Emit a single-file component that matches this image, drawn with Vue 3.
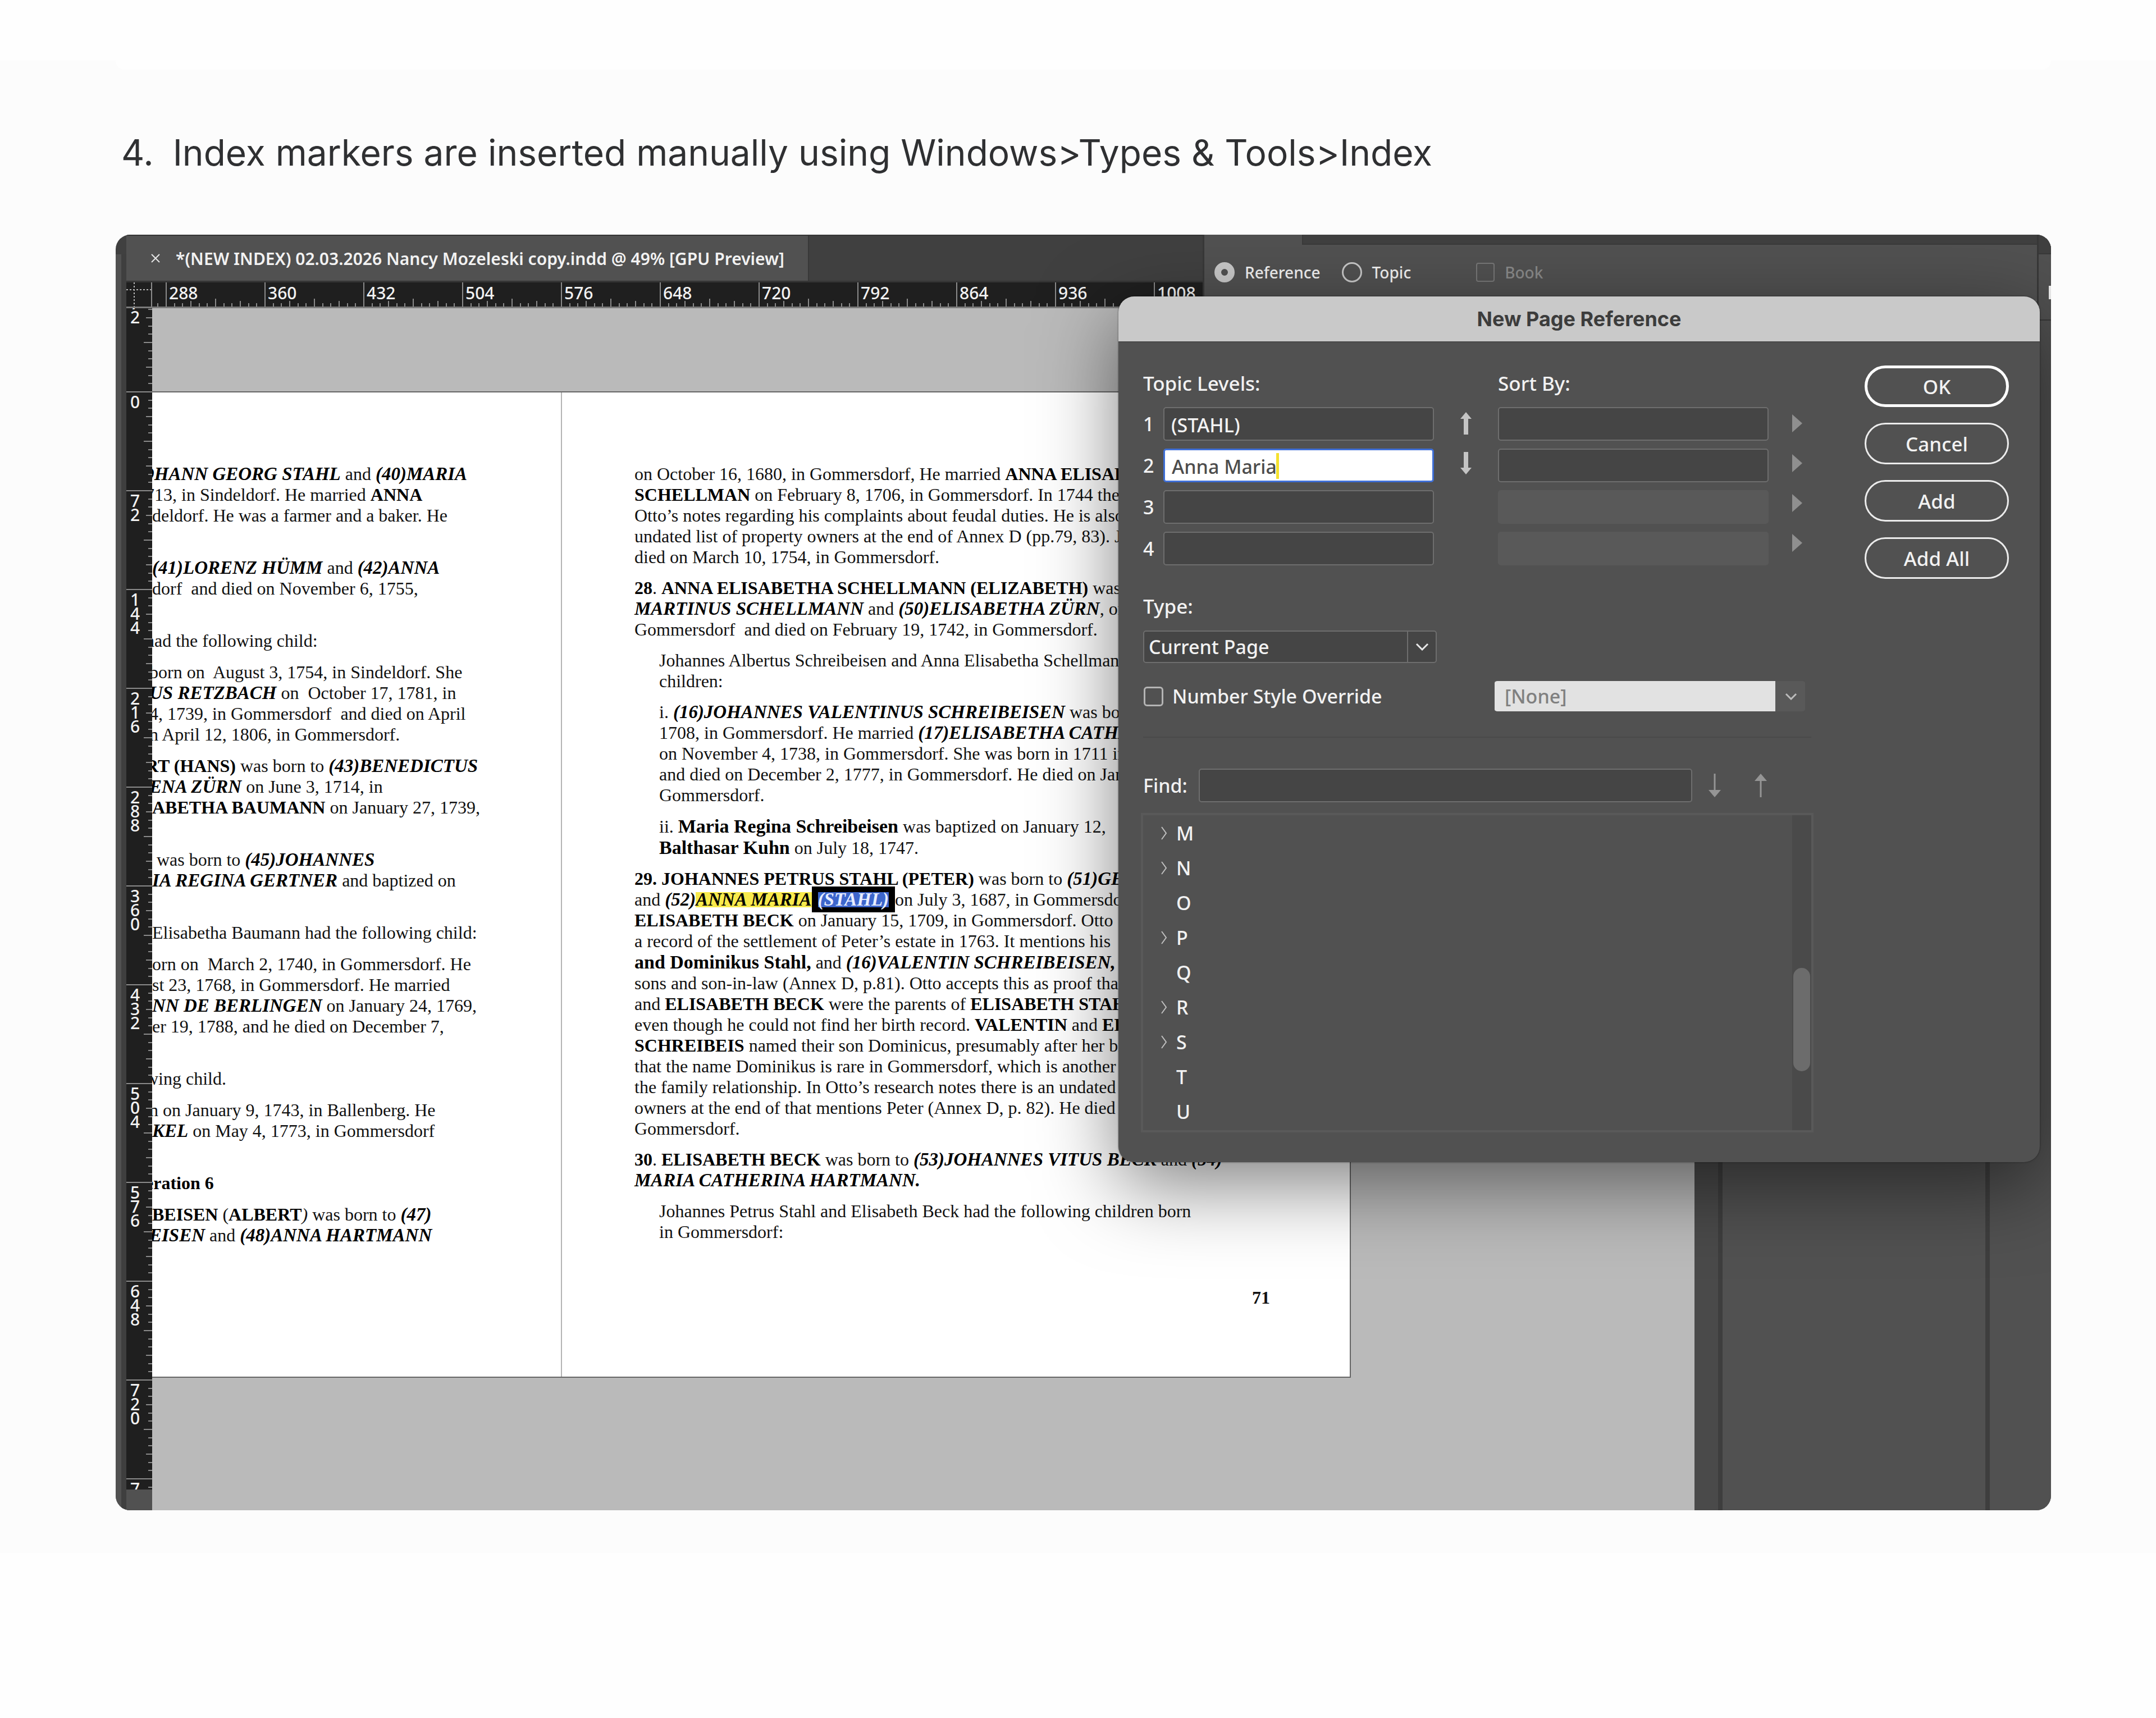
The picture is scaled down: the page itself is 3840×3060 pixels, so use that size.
<script setup>
import { ref } from 'vue'

// Ruler ticks: twelve per unit, the half and quarter marks longer than the rest.
const tickLength = (i) => (i === 6 ? 14 : i % 3 === 0 ? 10 : 6)
const marks = Array.from({ length: 11 }, (_, i) => i + 1)
const unit = 176
const at = (i) => Math.round((i * unit) / 12) + 1
const acrossTicks = 'M1 0V43' + marks.map((i) => `M${at(i)} 43v-${tickLength(i)}`).join('')
const downTicks = 'M0 1H46' + marks.map((i) => `M46 ${at(i)}h-${tickLength(i) + 1}`).join('')

const across = [288, 360, 432, 504, 576, 648, 720, 792, 864, 936, 1008]
const down = ['0', '72', '144', '216', '288', '360', '432', '504', '576', '648', '720']

// Text runs: plain string, or [style, string].
const leftPage = [
  { lines: [
    { cut: 'deep', runs: [['bi', 'OHANN GEORG STAHL'], ' and ', ['bi', '(40)MARIA']] },
    { cut: 'cut', runs: ['713, in Sindeldorf. He married ', ['b', 'ANNA']] },
    { runs: ['deldorf. He was a farmer and a baker. He'] },
    { runs: ['\u00a0'] },
  ] },
  { lines: [
    { runs: [['bi', '(41)LORENZ HÜMM'], ' and ', ['bi', '(42)ANNA']] },
    { runs: ['dorf  and died on November 6, 1755,'] },
    { runs: ['\u00a0'] },
  ] },
  { lines: [{ cut: 'cut', runs: ['had the following child:'] }] },
  { lines: [
    { cut: 'nick', runs: ['born on  August 3, 1754, in Sindeldorf. She'] },
    { cut: 'nick', runs: [['bi', 'US RETZBACH'], ' on  October 17, 1781, in'] },
    { cut: 'nick', runs: ['4, 1739, in Gommersdorf  and died on April'] },
    { cut: 'nick', runs: ['n April 12, 1806, in Gommersdorf.'] },
  ] },
  { lines: [
    { cut: 'cut', runs: [['b', 'RT (HANS)'], ' was born to ', ['bi', '(43)BENEDICTUS']] },
    { cut: 'nick', runs: [['bi', 'ENA ZÜRN'], ' on June 3, 1714, in'] },
    { runs: [['b', 'ABETHA BAUMANN'], ' on January 27, 1739,'] },
    { runs: ['\u00a0'] },
  ] },
  { lines: [
    { runs: ['\u00a0was born to ', ['bi', '(45)JOHANNES']] },
    { runs: [['bi', 'IA REGINA GERTNER'], ' and baptized on'] },
    { runs: ['\u00a0'] },
  ] },
  { lines: [{ runs: ['Elisabetha Baumann had the following child:'] }] },
  { lines: [
    { runs: ['orn on  March 2, 1740, in Gommersdorf. He'] },
    { runs: ['st 23, 1768, in Gommersdorf. He married'] },
    { runs: [['bi', 'NN DE BERLINGEN'], ' on January 24, 1769,'] },
    { runs: ['er 19, 1788, and he died on December 7,'] },
    { runs: ['\u00a0'] },
  ] },
  { lines: [{ cut: 'cut', runs: ['wing child.'] }] },
  { lines: [
    { cut: 'nick', runs: ['n on January 9, 1743, in Ballenberg. He'] },
    { runs: [['bi', 'KEL'], ' on May 4, 1773, in Gommersdorf'] },
    { runs: ['\u00a0'] },
  ] },
  { lines: [{ cut: 'cut', runs: [['b', 'eration 6']] }] },
  { lines: [
    { runs: [['b', 'BEISEN'], ' (', ['b', 'ALBERT'], ['i', ')'], ' was born to ', ['bi', '(47)']] },
    { cut: 'nick', runs: [['bi', 'EISEN'], ' and ', ['bi', '(48)ANNA HARTMANN']] },
  ] },
]

const rightPage = [
  { lines: [
    { runs: ['on October 16, 1680, in Gommersdorf, He married ', ['b', 'ANNA ELISABETHA']] },
    { runs: [['b', 'SCHELLMAN'], ' on February 8, 1706, in Gommersdorf. In 1744 there'] },
    { runs: ['Otto’s notes regarding his complaints about feudal duties. He is also'] },
    { runs: ['undated list of property owners at the end of Annex D (pp.79, 83). Jo'] },
    { runs: ['died on March 10, 1754, in Gommersdorf.'] },
  ] },
  { lines: [
    { runs: [['b', '28'], '. ', ['b', 'ANNA ELISABETHA SCHELLMANN (ELIZABETH)'], ' was'] },
    { runs: [['bi', 'MARTINUS SCHELLMANN'], ' and ', ['bi', '(50)ELISABETHA ZÜRN'], ', on'] },
    { runs: ['Gommersdorf  and died on February 19, 1742, in Gommersdorf.'] },
  ] },
  { inset: true, lines: [
    { runs: ['Johannes Albertus Schreibeisen and Anna Elisabetha Schellmann'] },
    { runs: ['children:'] },
  ] },
  { inset: true, lines: [
    { runs: ['i. ', ['bi', '(16)JOHANNES VALENTINUS SCHREIBEISEN'], ' was born'] },
    { runs: ['1708, in Gommersdorf. He married ', ['bi', '(17)ELISABETHA CATHA']] },
    { runs: ['on November 4, 1738, in Gommersdorf. She was born in 1711 in'] },
    { runs: ['and died on December 2, 1777, in Gommersdorf. He died on Jan'] },
    { runs: ['Gommersdorf.'] },
  ] },
  { inset: true, lines: [
    { runs: ['ii. ', ['name', 'Maria Regina Schreibeisen'], ' was baptized on January 12,'] },
    { runs: [['name', 'Balthasar Kuhn'], ' on July 18, 1747.'] },
  ] },
  { lines: [
    { runs: [['b', '29. JOHANNES PETRUS STAHL (PETER)'], ' was born to ', ['bi', '(51)GE']] },
    { runs: ['and ', ['bi', '(52)'], ['bi found', 'ANNA MARIA'], ['bi picked', '(STAHL)'], 'on July 3, 1687, in Gommersdorf'] },
    { runs: [['b', 'ELISABETH BECK'], ' on January 15, 1709, in Gommersdorf. Otto'] },
    { runs: ['a record of the settlement of Peter’s estate in 1763. It mentions his'] },
    { runs: [['name', 'and Dominikus Stahl,'], ' and ', ['bi', '(16)VALENTIN SCHREIBEISEN,']] },
    { runs: ['sons and son-in-law (Annex D, p.81). Otto accepts this as proof that'] },
    { runs: ['and ', ['b', 'ELISABETH BECK'], ' were the parents of ', ['b', 'ELISABETH STAHL']] },
    { runs: ['even though he could not find her birth record. ', ['b', 'VALENTIN'], ' and ', ['b', 'EL']] },
    { runs: [['b', 'SCHREIBEIS'], ' named their son Dominicus, presumably after her br'] },
    { runs: ['that the name Dominikus is rare in Gommersdorf, which is another'] },
    { runs: ['the family relationship. In Otto’s research notes there is an undated'] },
    { runs: ['owners at the end of that mentions Peter (Annex D, p. 82). He died'] },
    { runs: ['Gommersdorf.'] },
  ] },
  { lines: [
    { runs: [['b', '30'], '. ', ['b', 'ELISABETH BECK'], ' was born to ', ['bi', '(53)JOHANNES VITUS BECK'], ' and ', ['bi', '(54)']] },
    { runs: [['bi', 'MARIA CATHERINA HARTMANN.']] },
  ] },
  { inset: true, lines: [
    { runs: ['Johannes Petrus Stahl and Elisabeth Beck had the following children born'] },
    { runs: ['in Gommersdorf:'] },
  ] },
]

const pages = [
  { side: 'left', paragraphs: leftPage },
  { side: 'right', paragraphs: rightPage, folio: '71' },
]

const topics = ref(['(STAHL)', 'Anna Maria', '', ''])
const sortBy = ref(['', '', '', ''])
const find = ref('')
const kind = ref('Reference')
const letters = [
  ['M', true], ['N', true], ['O', false], ['P', true], ['Q', false],
  ['R', true], ['S', true], ['T', false], ['U', false],
]
const actions = ['OK', 'Cancel', 'Add', 'Add All']
</script>

<template>
  <div class="screen">
    <main class="band">
      <div class="previous"></div>
      <h2 class="step"><span>4.</span>Index markers are inserted manually using Windows&gt;Types &amp; Tools&gt;Index</h2>

      <section class="shot">
        <div class="edge"></div>

        <div class="document">
          <div class="tabs">
            <div class="tab">
              <button class="close" aria-label="Close document">
                <svg width="20" height="20" viewBox="0 0 20 20"><path d="M3 3l14 14M17 3L3 17" stroke="#e6e6e6" stroke-width="2" /></svg>
              </button>
              *(NEW INDEX) 02.03.2026 Nancy Mozeleski copy.indd @ 49% [GPU Preview]
            </div>
          </div>

          <div class="ruler-row">
            <svg class="corner" width="46" height="43" viewBox="0 0 46 43">
              <path d="M14 0V43M0 13H46" stroke="#b5b5b5" stroke-width="2" stroke-dasharray="3 3" />
              <path d="M45 0V43" stroke="#8c8c8c" stroke-width="2" />
            </svg>
            <div class="across">
              <div class="lead"><svg width="176" height="43"><path :d="acrossTicks" /></svg></div>
              <div v-for="n in across" :key="n" class="unit-x">
                <svg width="176" height="43"><path :d="acrossTicks" /></svg>
                <span>{{ n }}</span>
              </div>
            </div>
          </div>

          <div class="work">
            <div class="down">
              <div class="unit-y first">
                <div><svg width="46" height="176"><path :d="downTicks" /></svg><span>7</span><span>2</span></div>
              </div>
              <div v-for="n in down" :key="n" class="unit-y">
                <div><svg width="46" height="176"><path :d="downTicks" /></svg><span v-for="(d, i) in n" :key="i">{{ d }}</span></div>
              </div>
              <div class="unit-y last">
                <div><svg width="46" height="176"><path :d="downTicks" /></svg><span>7</span></div>
              </div>
              <div class="foot"></div>
            </div>

            <div class="canvas">
              <div class="spread">
                <article v-for="page in pages" :key="page.side" :class="['page', page.side]">
                  <p v-for="(para, p) in page.paragraphs" :key="p" :class="{ inset: para.inset }">
                    <span v-for="(line, l) in para.lines" :key="l" :class="['line', line.cut]"><template v-for="(run, r) in line.runs" :key="r"><template v-if="typeof run === 'string'">{{ run }}</template><span v-else :class="run[0]"><i v-if="run[0] === 'bi picked'">{{ run[1] }}</i><template v-else>{{ run[1] }}</template></span></template></span>
                  </p>
                  <footer v-if="page.folio">{{ page.folio }}</footer>
                </article>
              </div>
            </div>
          </div>
        </div>

        <aside class="dock"><div class="dock-narrow"></div><div class="dock-wide"></div><div class="dock-end"></div></aside>

        <aside class="index-panel">
          <div class="index-main">
            <div class="index-head"></div>
            <form class="index-options">
              <label class="choice"><input v-model="kind" type="radio" name="kind" value="Reference" />Reference</label>
              <label class="choice"><input v-model="kind" type="radio" name="kind" value="Topic" />Topic</label>
              <label class="choice book"><input type="checkbox" disabled />Book</label>
            </form>
            <div class="index-body"></div>
          </div>
          <div class="strip"><div class="strip-top"></div><div class="strip-mid"><i></i></div><div class="strip-low"></div></div>
        </aside>

        <div class="dialog" role="dialog" aria-labelledby="dialog-title">
          <h3 id="dialog-title">New Page Reference</h3>
          <div class="dialog-body">
            <div class="fields">
              <div class="levels">
                <div class="col">
                  <div class="caption">Topic Levels:</div>
                  <div v-for="(t, i) in topics" :key="i" class="level">
                    <label :for="'topic' + i">{{ i + 1 }}</label>
                    <div class="entry">
                      <input :id="'topic' + i" v-model="topics[i]" type="text" :class="['box', { active: i === 1 }]" />
                      <span v-if="i === 1" class="caret"></span>
                    </div>
                  </div>
                </div>
                <div class="steps">
                  <button aria-label="Move up"><svg width="20" height="40" viewBox="0 0 20 40"><path d="M10 0L20 12H14V40H6V12H0Z" fill="#c4c4c4" /></svg></button>
                  <button aria-label="Move down"><svg width="20" height="40" viewBox="0 0 20 40"><path d="M10 40L20 28H14V0H6V28H0Z" fill="#c4c4c4" /></svg></button>
                </div>
                <div class="col">
                  <div class="caption">Sort By:</div>
                  <div v-for="(s, i) in sortBy" :key="i" class="level">
                    <input v-model="sortBy[i]" type="text" class="box" :aria-label="'Sort by ' + (i + 1)" :disabled="i > 1" />
                  </div>
                </div>
                <div class="steps menus">
                  <button v-for="i in 4" :key="i" :aria-label="'Sort options ' + i"><svg width="18" height="32" viewBox="0 0 18 32"><path d="M0 0L18 16L0 32Z" fill="#8f8f8f" /></svg></button>
                </div>
              </div>

              <label class="caption type-caption" for="type">Type:</label>
              <div class="select type">
                <select id="type"><option>Current Page</option></select>
                <svg width="24" height="14" viewBox="0 0 24 14"><path d="M2 2L12 12L22 2" fill="none" stroke="#e8e8e8" stroke-width="3" /></svg>
              </div>

              <div class="override">
                <label><input type="checkbox" />Number Style Override</label>
                <div class="select style">
                  <select disabled aria-label="Number style"><option>[None]</option></select>
                  <svg width="22" height="13" viewBox="0 0 22 13"><path d="M2 2L11 11L20 2" fill="none" stroke="#bcbcbc" stroke-width="3" /></svg>
                </div>
              </div>

              <hr />

              <div class="find">
                <label for="find">Find:</label>
                <input id="find" v-model="find" type="text" class="box" />
                <button aria-label="Find next"><svg width="22" height="42" viewBox="0 0 22 42"><path d="M11 0V30" stroke="#959595" stroke-width="3" /><path d="M0 29H22L11 42Z" fill="#959595" /></svg></button>
                <button aria-label="Find previous"><svg width="22" height="42" viewBox="0 0 22 42"><path d="M11 42V12" stroke="#959595" stroke-width="3" /><path d="M0 13H22L11 0Z" fill="#959595" /></svg></button>
              </div>

              <div class="list">
                <ul>
                  <li v-for="[name, open] in letters" :key="name">
                    <svg width="12" height="28" viewBox="0 0 12 28"><path v-if="open" d="M2 3L10 14L2 25" fill="none" stroke="#c0c0c0" stroke-width="2" /></svg>
                    {{ name }}
                  </li>
                </ul>
                <div class="track"><div class="thumb"></div></div>
              </div>
            </div>

            <div class="actions">
              <button v-for="a in actions" :key="a" :class="{ primary: a === 'OK' }">{{ a }}</button>
            </div>
          </div>
        </div>
      </section>
    </main>
  </div>
</template>

<style>
body {
  margin: 0;
  background: #fefefe;
}
</style>

<style scoped>
* {
  box-sizing: border-box;
}
button {
  padding: 0;
  border: 0;
  background: none;
  font: inherit;
  color: inherit;
}
svg {
  display: block;
  flex: none;
}
.screen {
  padding: 108px 0 294px;
  font-family: 'Noto Sans', sans-serif;
  font-size: 34px;
  font-weight: 500;
}
.band {
  padding: 0 187px 76px 206px;
  background: #fcfcfc;
}
.previous {
  height: 16px;
  background: #fefefe;
  border-radius: 0 0 28px 28px;
}
.step {
  display: flex;
  gap: 34px;
  margin: 0;
  padding: 108px 0 106px 10px;
  font: 400 64px/80px Inter, sans-serif;
  color: #2f3032;
  white-space: nowrap;
}

/* captured application window */
.shot {
  position: relative;
  display: flex;
  overflow: hidden;
  border-radius: 26px;
  background: #404040;
  color: #f2f2f2;
}
.edge {
  width: 19px;
  margin-top: 35px;
  background: #515151;
  border-right: 9px solid #3f3f3f;
}
.document {
  flex: 1;
  min-width: 0;
}
.tabs {
  display: flex;
  height: 85px;
  border-top: 2px solid #353535;
  border-bottom: 3px solid #353535;
}
.tab {
  display: flex;
  align-items: center;
  gap: 26px;
  padding: 0 42px;
  background: #515151;
  border-right: 2px solid #383838;
  font-size: 30px;
  font-weight: 650;
  white-space: nowrap;
}
.ruler-row {
  display: flex;
  height: 46px;
  background: #1f1f1f;
  border-bottom: 3px solid #7b7b7b;
}
.across {
  flex: 1;
  display: flex;
  overflow: hidden;
}
.across path,
.down path {
  stroke: #8a8a8a;
  stroke-width: 2;
}
.lead {
  flex: none;
  display: flex;
  justify-content: flex-end;
  width: 24px;
  overflow: hidden;
}
.unit-x {
  flex: none;
  display: grid;
  width: 176px;
}
.unit-x > * {
  grid-area: 1 / 1;
}
.unit-x span {
  padding-left: 6px;
  font-size: 30px;
  line-height: 38px;
}
.work {
  display: flex;
}
.down {
  display: flex;
  flex-direction: column;
  width: 46px;
  background: #1f1f1f;
}
.unit-y {
  flex: none;
  height: 176px;
  overflow: hidden;
}
.unit-y > div {
  display: grid;
  grid-template-columns: 46px;
  grid-auto-rows: 25px;
  height: 176px;
  padding-top: 6px;
}
.unit-y svg {
  grid-area: 1 / 1;
  margin-top: -6px;
}
.unit-y span {
  grid-column: 1;
  padding-left: 7px;
  font-size: 30px;
  line-height: 25px;
}
.unit-y span:nth-of-type(1) {
  grid-row: 1;
}
.unit-y.first {
  display: flex;
  align-items: flex-end;
  height: 148px;
}
.unit-y.last {
  height: 20px;
}
.foot {
  flex: 1;
  background: #515151;
}
.canvas {
  flex: 1;
  min-width: 0;
  padding: 148px 0 236px;
  overflow: hidden;
  background: #bababa;
}

/* the open spread */
.spread {
  display: flex;
  width: 2135px;
  min-height: 1757px;
  border: solid #666;
  border-width: 2px 2px 2px 0;
  background: #fff;
  color: #111;
  font: 32px/37px 'Liberation Serif', serif;
}
.page {
  padding-top: 127px;
}
.page p {
  margin: 0;
}
.left {
  width: 728px;
  overflow: hidden;
}
.left p + p {
  margin-top: 19px;
}
.right {
  flex: 1;
  min-width: 0;
  padding-left: 129px;
  border-left: 2px solid #b4b4b4;
}
.right p + p {
  margin-top: 18px;
}
.right p.inset {
  padding-left: 44px;
}
.line {
  display: block;
  white-space: pre;
}
.nick {
  margin-left: -5px;
}
.cut {
  margin-left: -12px;
}
.deep {
  margin-left: -20px;
}
.b,
.bi,
.name {
  font-weight: 700;
  color: #000;
}
.i,
.bi {
  font-style: italic;
}
.bi {
  font-size: 33px;
}
.name {
  font-size: 34px;
}
.found {
  background: linear-gradient(transparent 15%, #f8ea4c 15% 88%, transparent 88%);
}
.picked {
  padding: 5px 11px;
  background: #000;
  color: #e8eeff;
}
.picked i {
  background: linear-gradient(transparent 15%, #3d66cc 15% 90%, transparent 90%);
}
footer {
  padding: 80px 142px 0 0;
  text-align: right;
  font-weight: 700;
}

/* panels on the right */
.dock {
  display: flex;
  width: 635px;
  background: #515151;
}
.dock-narrow {
  width: 50px;
  background: #4a4a4a;
  border-right: 8px solid #3e3e3e;
}
.dock-wide {
  flex: 1;
  border-right: 8px solid #3e3e3e;
}
.dock-end {
  width: 109px;
}
.index-panel {
  position: absolute;
  top: 0;
  right: 0;
  display: flex;
  width: 1511px;
  height: 600px;
  border-left: 3px solid #383838;
}
.index-main {
  flex: 1;
  background: #515151;
  border-right: 3px solid #383838;
}
.index-head {
  height: 18px;
  margin-left: 174px;
  background: #404040;
  border: solid #3a3a3a;
  border-width: 0 0 2px 2px;
}
.index-options {
  display: flex;
  align-items: center;
  height: 98px;
  padding-left: 18px;
  font-size: 28px;
}
.choice {
  display: flex;
  align-items: center;
  gap: 18px;
  margin-right: 38px;
}
.choice input {
  appearance: none;
  width: 36px;
  height: 36px;
  margin: 0;
  border: 3px solid #c8c8c8;
  border-radius: 50%;
}
.choice input:checked {
  border-width: 12px;
}
.choice.book {
  margin-left: 78px;
  color: #8a8a8a;
}
.choice.book input {
  width: 33px;
  height: 34px;
  border: 2px solid #787878;
  border-radius: 4px;
}
.index-body {
  height: 484px;
  border-top: 2px solid #5f5f5f;
}
.strip {
  width: 22px;
  background: #515151;
}
.strip-top {
  height: 35px;
  background: #404040;
  border-bottom: 2px solid #383838;
}
.strip-mid {
  display: flex;
  align-items: flex-end;
  justify-content: flex-end;
  height: 118px;
  padding-bottom: 36px;
  border-bottom: 2px solid #383838;
}
.strip-mid i {
  width: 4px;
  height: 24px;
  background: #f0f0f0;
}

/* dialog */
.dialog {
  position: absolute;
  top: 110px;
  right: 20px;
  width: 1641px;
  border-radius: 28px;
  background: #515151;
  box-shadow: 0 0 3px rgba(0, 0, 0, 0.5), 0 40px 140px rgba(0, 0, 0, 0.5);
}
.dialog h3 {
  margin: 0;
  border-radius: 28px 28px 0 0;
  background: #c9c9c9;
  border-bottom: 2px solid #484848;
  color: #3c3c3c;
  font: 700 36px/80px Inter, sans-serif;
  text-align: center;
}
.dialog-body {
  display: flex;
  gap: 91px;
  padding: 41px 55px 53px 40px;
}
.fields {
  flex: 1;
}
.levels {
  display: flex;
  padding-left: 4px;
}
.caption {
  display: block;
  height: 64px;
  font-size: 35px;
  line-height: 64px;
}
.levels .caption {
  margin-bottom: 10px;
}
.level {
  display: flex;
  align-items: center;
  height: 60px;
}
.level + .level {
  margin-top: 14px;
}
.level label {
  width: 36px;
}
.entry {
  position: relative;
}
.box {
  display: block;
  width: 482px;
  height: 60px;
  padding: 4px 12px 0;
  border: 2px solid #6e6e6e;
  border-radius: 5px;
  outline: 0;
  background: #454545;
  color: #f2f2f2;
  font: inherit;
}
.box:disabled {
  background: #595959;
  border-color: #595959;
}
.box.active {
  background: #fff;
  border: 3px solid #3f6fd6;
  color: #4c4c4c;
}
.caret {
  position: absolute;
  top: 8px;
  left: 201px;
  width: 5px;
  height: 46px;
  background: #f5e12e;
}
.steps {
  width: 114px;
  padding-top: 67px;
}
.steps button {
  display: flex;
  align-items: center;
  justify-content: center;
  width: 100%;
  height: 71px;
}
.menus {
  width: 79px;
}
.menus button {
  justify-content: flex-start;
  padding-left: 42px;
}
.type-caption {
  margin: 41px 0 11px 4px;
}
.select {
  display: flex;
  align-items: center;
  position: relative;
}
.select select {
  appearance: none;
  width: 100%;
  height: 58px;
  margin: 0;
  border-radius: 5px;
  font: inherit;
  opacity: 1;
}
.select svg {
  position: absolute;
  right: 14px;
  pointer-events: none;
}
.type {
  width: 523px;
  margin-left: 4px;
}
.type select {
  padding: 0 8px;
  border: 2px solid #6e6e6e;
  background: linear-gradient(#6e6e6e, #6e6e6e) 468px 0 / 2px 100% no-repeat #454545;
  color: #f2f2f2;
}
.override {
  display: flex;
  align-items: center;
  justify-content: space-between;
  margin-top: 30px;
  padding: 0 15px 0 5px;
}
.override label {
  display: flex;
  align-items: center;
  gap: 16px;
}
.override input {
  appearance: none;
  width: 35px;
  height: 35px;
  margin: 0;
  border: 3px solid #b4b4b4;
  border-radius: 6px;
}
.style {
  width: 553px;
}
.style select {
  padding: 0 18px;
  border: solid #515151;
  border-width: 2px 0;
  background: linear-gradient(#e2e2e2, #e2e2e2) 0 0 / 500px 100% no-repeat #595959;
  color: #808080;
}
hr {
  height: 2px;
  margin: 43px 4px 0;
  border: 0;
  background: #494949;
}
.find {
  display: flex;
  align-items: center;
  gap: 20px;
  margin-top: 55px;
  padding-left: 4px;
}
.find .box {
  width: 879px;
}
.find button {
  width: 40px;
}
.find button + button {
  margin-left: 22px;
}
.find button svg {
  margin: auto;
}
.list {
  display: flex;
  height: 569px;
  margin-top: 19px;
  overflow: hidden;
  border: 4px solid #595959;
}
ul {
  flex: 1;
  margin: 0;
  padding: 1px 0 0 31px;
  list-style: none;
}
li {
  display: flex;
  align-items: center;
  gap: 16px;
  height: 62px;
}
.track {
  width: 34px;
  padding: 272px 2px 0;
  background: #4a4a4a;
}
.thumb {
  height: 184px;
  border-radius: 15px;
  background: #6c6c6c;
}
.actions {
  display: flex;
  flex-direction: column;
  gap: 28px;
  width: 257px;
}
.actions button {
  height: 74px;
  border: 3px solid #ececec;
  border-radius: 37px;
  font-size: 35px;
}
.actions .primary {
  border: 5px solid #fff;
}
</style>
